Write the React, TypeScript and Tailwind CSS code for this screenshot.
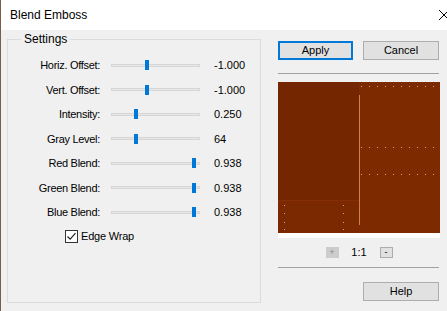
import React from 'react';

const rows = [
  { label: 'Horiz. Offset:', pos: 34, value: '-1.000' },
  { label: 'Vert. Offset:', pos: 34, value: '-1.000' },
  { label: 'Intensity:', pos: 23, value: '0.250' },
  { label: 'Gray Level:', pos: 23, value: '64' },
  { label: 'Red Blend:', pos: 81, value: '0.938' },
  { label: 'Green Blend:', pos: 81, value: '0.938' },
  { label: 'Blue Blend:', pos: 81, value: '0.938' },
];

function Slider({ pos }: { pos: number }) {
  return (
    <div className="relative w-[89px] h-[12px] flex items-center">
      <div className="w-full h-[3px] bg-[#e7e7e7] border border-[#d6d6d6]" />
      {/* thumb */}
      <div className="absolute top-[1px] w-[4px] h-[10px] bg-[#0078d7]" style={{ left: pos }} />
    </div>
  );
}

function Preview() {
  const topDots = Array.from({ length: 10 }, (_, i) => 83 + i * 8);
  const leftRows = [123, 131, 140, 147];
  return (
    <svg width="162" height="151" viewBox="0 0 162 151" className="block">
      <rect width="162" height="151" fill="#7e2a00" />
      <rect x="0" y="0" width="81" height="118" fill="#742600" />
      <rect x="0" y="118" width="81" height="33" fill="#7b2900" />
      <rect x="0" y="118" width="81" height="1" fill="#862f05" />
      <rect x="81" y="13" width="1" height="130" fill="#c98350" />
      {topDots.map((x) => (
        <rect key={'t' + x} x={x} y="4" width="1" height="1" fill="#e4a274" />
      ))}
      {topDots.map((x) => (
        <rect key={'m' + x} x={x} y="65" width="1" height="1" fill="#e4a274" />
      ))}
      {topDots.map((x) => (
        <rect key={'n' + x} x={x} y="92" width="1" height="1" fill="#e4a274" />
      ))}
      {leftRows.map((y) => (
        <g key={'l' + y}>
          <rect x="6" y={y} width="1" height="1" fill="#e4a274" />
          <rect x="65" y={y} width="1" height="1" fill="#e4a274" />
        </g>
      ))}
    </svg>
  );
}

export default function App() {
  return (
    <div className="w-[447px] h-[311px] bg-[#f0f0f0] border-l border-[#7a5c48] text-[11px] text-black font-['Liberation_Sans',Arial,sans-serif] flex flex-col overflow-hidden">
      {/* title bar */}
      <div className="h-[30px] bg-white flex items-center justify-between pl-[9px] shrink-0">
        <span className="text-[12px]">Blend Emboss</span>
        <svg width="10" height="10" viewBox="0 0 10 10" className="translate-x-[2px]">
          <path d="M0 0 L10 10 M10 0 L0 10" stroke="#000" strokeWidth="1" />
        </svg>
      </div>

      <div className="flex flex-1">
        {/* settings group */}
        <fieldset className="ml-[6px] mt-[2px] mb-[8px] w-[254px] border border-[#dcdcdc] px-[7px] pt-[7px]">
          <legend className="ml-[6px] px-[3px] text-[12px] leading-[14px]">Settings</legend>
          <div className="flex flex-col">
            {rows.map((r) => (
              <div key={r.label} className="h-[24.5px] flex items-center">
                <div className="w-[85px] text-right tracking-[-0.3px]">{r.label}</div>
                <div className="ml-[11px]">
                  <Slider pos={r.pos} />
                </div>
                <div className="ml-[14px]">{r.value}</div>
              </div>
            ))}
            <div className="h-[24px] flex items-center pl-[50px]">
              <div className="w-[13px] h-[13px] border border-[#333] bg-white flex items-center justify-center">
                <svg width="11" height="11" viewBox="0 0 11 11">
                  <path d="M1.5 5.5 L4.2 8.2 L9.5 2.2" fill="none" stroke="#222" strokeWidth="1.2" />
                </svg>
              </div>
              <span className="ml-[3px] tracking-[-0.2px]">Edge Wrap</span>
            </div>
          </div>
        </fieldset>

        {/* right column */}
        <div className="ml-[17px] w-[162px] flex flex-col pt-[11px]">
          <div className="flex gap-[10px]">
            <button className="w-[75px] h-[19px] border-2 border-[#0078d7] bg-[#e1e1e1] flex items-center justify-center">
              Apply
            </button>
            <button className="w-[76px] h-[19px] border border-[#adadad] bg-[#e1e1e1] flex items-center justify-center">
              Cancel
            </button>
          </div>
          <div className="mt-[13px] h-[1px] w-[161px] bg-[#a0a0a0]" />
          <div className="mt-[8px]">
            <Preview />
          </div>
          <div className="h-[5px] bg-white" />
          <div className="mt-[9px] flex items-center justify-center h-[11px]">
            <div className="w-[13px] h-[11px] bg-[#cccccc] flex items-center justify-center text-[9px] text-[#8a8a8a] leading-none">+</div>
            <div className="w-[41px] text-center">1:1</div>
            <div className="w-[13px] h-[11px] bg-[#e1e1e1] border border-[#adadad] flex items-center justify-center text-[9px] leading-none">-</div>
          </div>
          <div className="mt-[9px] h-[1px] w-[161px] bg-[#a0a0a0]" />
          <div className="mt-[14px] flex justify-end pr-[1px]">
            <button className="w-[76px] h-[19px] border border-[#adadad] bg-[#e1e1e1] flex items-center justify-center">
              Help
            </button>
          </div>
        </div>
      </div>
    </div>
  );
}
